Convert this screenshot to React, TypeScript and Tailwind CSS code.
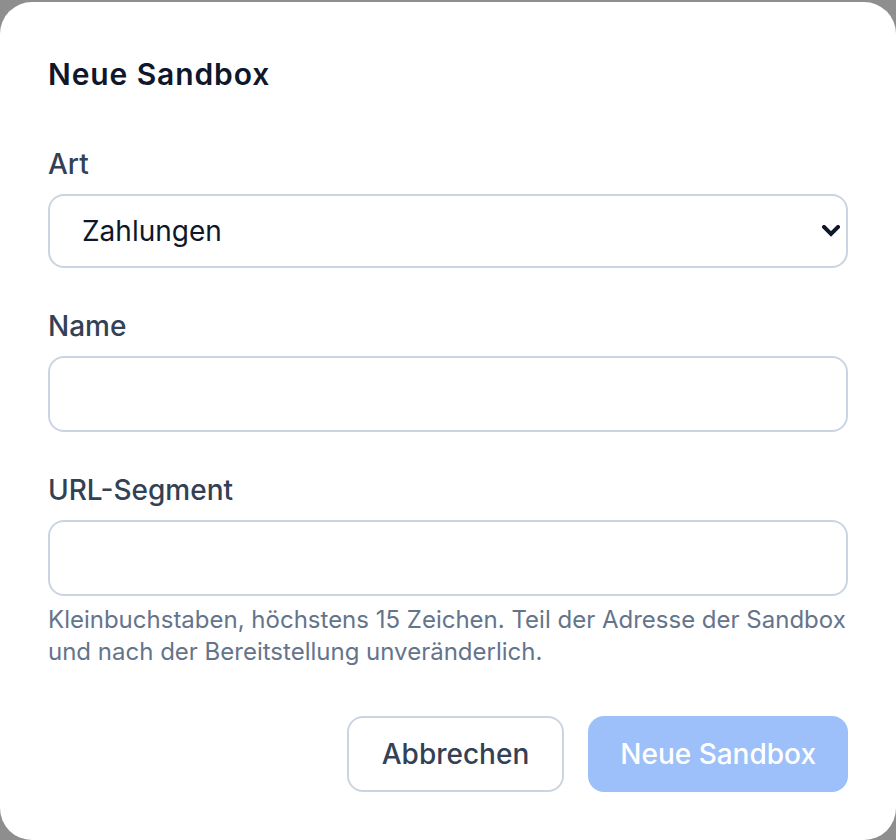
import React, { useState } from 'react';

const Label = ({ children }: { children: React.ReactNode }) => (
  <label className="block text-[28px] leading-[40px] font-medium text-[#334155]">{children}</label>
);

const fieldClass =
  'w-full rounded-[16px] border-2 border-[#cbd5e1] bg-white px-[32px] text-[28px] text-[#0f172a] outline-none';

export default function App() {
  const [kind, setKind] = useState('Zahlungen');
  const [name, setName] = useState('');
  const [slug, setSlug] = useState('');

  return (
    <div
      className="w-[896px] h-[840px] overflow-hidden bg-[#8e8e8e] pt-[2px]"
      style={{ fontFamily: 'Inter, "Noto Sans", sans-serif' }}
    >
      <div className="w-[896px] h-[838px] bg-white rounded-[32px] px-[48px] pt-[54px]">
        <h2 className="text-[30px] leading-[36px] font-semibold tracking-[0.9px] text-[#0f172a]">Neue Sandbox</h2>

        <div className="mt-[52px]">
          <Label>Art</Label>
          <div className="relative mt-[10px]">
            <select
              value={kind}
              onChange={e => setKind(e.target.value)}
              className={`${fieldClass} appearance-none h-[74px]`}
            >
              <option>Zahlungen</option>
              <option>Identität</option>
            </select>
            <svg
              className="absolute right-[8px] top-[31px] pointer-events-none"
              width="18"
              height="12"
              viewBox="0 0 18 12"
              fill="none"
            >
              <path d="M2 2 L9 9 L16 2" stroke="#0f172a" strokeWidth="4" strokeLinecap="square" />
            </svg>
          </div>
        </div>

        <div className="mt-[38px]">
          <Label>Name</Label>
          <input value={name} onChange={e => setName(e.target.value)} className={`${fieldClass} h-[76px] mt-[10px]`} />
        </div>

        <div className="mt-[38px]">
          <Label>URL-Segment</Label>
          <input value={slug} onChange={e => setSlug(e.target.value)} className={`${fieldClass} h-[76px] mt-[10px]`} />
          <p className="mt-[8px] text-[24px] leading-[32px] text-[#64748b]">
            Kleinbuchstaben, höchstens 15 Zeichen. Teil der Adresse der Sandbox und nach der Bereitstellung unveränderlich.
          </p>
        </div>

        <div className="mt-[48px] flex justify-end gap-[24px]">
          <button className="h-[76px] px-[33px] rounded-[16px] border-2 border-[#cbd5e1] bg-white text-[28px] font-medium text-[#334155]">
            Abbrechen
          </button>
          <button
            disabled
            className="h-[76px] px-[30px] rounded-[16px] border-2 border-transparent bg-[#9dc0fa] text-[28px] font-medium text-white"
          >
            Neue Sandbox
          </button>
        </div>
      </div>
    </div>
  );
}
